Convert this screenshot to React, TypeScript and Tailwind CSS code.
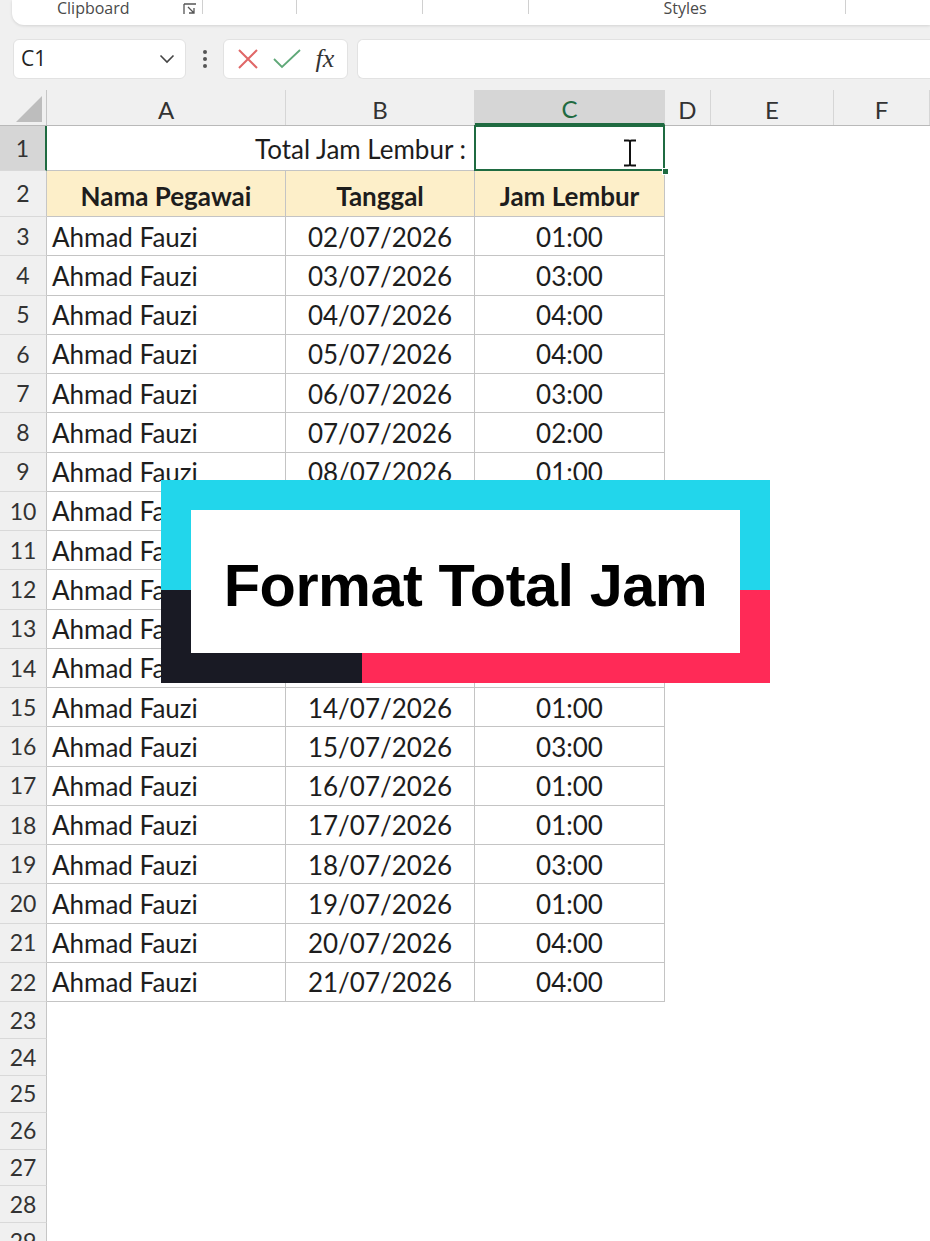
import React from "react";

type Entry = { date: string; hours: string };

const entries: Entry[] = [
  { date: "02/07/2026", hours: "01:00" },
  { date: "03/07/2026", hours: "03:00" },
  { date: "04/07/2026", hours: "04:00" },
  { date: "05/07/2026", hours: "04:00" },
  { date: "06/07/2026", hours: "03:00" },
  { date: "07/07/2026", hours: "02:00" },
  { date: "08/07/2026", hours: "01:00" },
  { date: "09/07/2026", hours: "02:00" },
  { date: "10/07/2026", hours: "03:00" },
  { date: "11/07/2026", hours: "01:00" },
  { date: "12/07/2026", hours: "04:00" },
  { date: "13/07/2026", hours: "02:00" },
  { date: "14/07/2026", hours: "01:00" },
  { date: "15/07/2026", hours: "03:00" },
  { date: "16/07/2026", hours: "01:00" },
  { date: "17/07/2026", hours: "01:00" },
  { date: "18/07/2026", hours: "03:00" },
  { date: "19/07/2026", hours: "01:00" },
  { date: "20/07/2026", hours: "04:00" },
  { date: "21/07/2026", hours: "04:00" },
];

const cellFont = { fontFamily: "Lato, 'Open Sans', sans-serif" };

function RowHead({ n, active }: { n: number; active?: boolean }) {
  return (
    <div
      className={`w-[47px] shrink-0 flex items-center justify-center border-b border-[#d9d9d9] text-[23px] ${
        active ? "bg-[#d6d6d6] border-r-2 border-r-[#1f6b41] text-[#333]" : "bg-[#f0f0f0] border-r border-r-[#c6c6c6] text-[#333]"
      }`}
    >
      {n}
    </div>
  );
}

function Ribbon() {
  return (
    <div className="h-[90px] bg-[#f0f0f0] flex flex-col" style={{ fontFamily: "'Open Sans', sans-serif" }}>
      {/* bottom edge of the ribbon groups */}
      <div className="ml-[12px] h-[25px] bg-white rounded-bl-[12px] shadow-[0_1px_3px_rgba(0,0,0,0.12)] flex items-start text-[#4a4a4a] text-[16px] leading-none">
        <div className="w-[190px] h-full relative flex items-start">
          <span className="ml-[45px]">Clipboard</span>
          <svg className="absolute left-[171px] top-[3px]" width="14" height="12" viewBox="0 0 14 12">
            <path d="M1 1h12M1 1v10" stroke="#555" strokeWidth="1.3" fill="none" />
            <path d="M5 4l6 6M11 5v5H6" stroke="#555" strokeWidth="1.3" fill="none" />
          </svg>
        </div>
        <div className="w-[94px] h-[14px] border-l border-[#d0d0d0]" />
        <div className="w-[126px] h-[14px] border-l border-[#d0d0d0]" />
        <div className="w-[106px] h-[14px] border-l border-[#d0d0d0]" />
        <div className="w-[317px] h-[14px] border-l border-[#d0d0d0] flex justify-center">
          <span className="-ml-[4px]">Styles</span>
        </div>
        <div className="flex-1 h-[14px] border-l border-[#d0d0d0]" />
      </div>

      {/* name box and formula bar */}
      <div className="mt-[13px] h-[41px] flex items-center">
        <div className="ml-[13px] w-[173px] h-[40px] bg-white rounded-[6px] border border-[#e2e2e2] flex items-center justify-between pl-[7px] pr-[10px]">
          <span className="text-[21px] text-[#222]">C1</span>
          <svg width="16" height="10" viewBox="0 0 16 10">
            <path d="M1.5 1.5l6.5 6.5 6.5-6.5" stroke="#444" strokeWidth="1.6" fill="none" />
          </svg>
        </div>
        <div className="w-[37px] flex flex-col items-center gap-[3px]">
          <span className="w-[4px] h-[4px] rounded-full bg-[#555]" />
          <span className="w-[4px] h-[4px] rounded-full bg-[#555]" />
          <span className="w-[4px] h-[4px] rounded-full bg-[#555]" />
        </div>
        <div className="w-[125px] h-[40px] bg-white rounded-[6px] border border-[#e2e2e2] flex items-center justify-around px-[6px]">
          <svg width="22" height="22" viewBox="0 0 22 22">
            <path d="M2 2l18 18M20 2L2 20" stroke="#e06767" strokeWidth="2" />
          </svg>
          <svg width="30" height="22" viewBox="0 0 30 22">
            <path d="M2 11l8 8L28 2" stroke="#5fa878" strokeWidth="1.8" fill="none" />
          </svg>
          <span className="text-[26px] italic text-[#333] leading-none" style={{ fontFamily: "'Liberation Serif', serif" }}>
            fx
          </span>
        </div>
        <div className="ml-[9px] flex-1 h-[40px] bg-white rounded-l-[6px] border border-r-0 border-[#e2e2e2]" />
      </div>
    </div>
  );
}

function ColumnHeader() {
  const cols = [
    { label: "A", w: "w-[239px]" },
    { label: "B", w: "w-[189px]" },
    { label: "C", w: "w-[190px]", active: true },
    { label: "D", w: "w-[46px]" },
    { label: "E", w: "w-[123px]" },
    { label: "F", w: "flex-1" },
  ];
  return (
    <div className="h-[36px] flex bg-[#f0f0f0] border-b border-[#b9b9b9] text-[24px]" style={cellFont}>
      <div className="w-[47px] shrink-0 border-r border-[#c6c6c6] relative">
        <svg className="absolute right-[4px] bottom-[3px]" width="26" height="26" viewBox="0 0 26 26">
          <path d="M26 0V26H0Z" fill="#bdbdbd" />
        </svg>
      </div>
      {cols.map((c) => (
        <div
          key={c.label}
          className={`${c.w} shrink-0 flex items-center justify-center pt-[4px] border-r border-[#d6d6d6] ${
            c.active ? "bg-[#d6d6d6] text-[#1f6b41] border-b-2 border-b-[#1f6b41]" : "text-[#333]"
          }`}
        >
          {c.label}
        </div>
      ))}
    </div>
  );
}

function Sheet() {
  return (
    <div className="flex flex-col text-[#1d1d1d]" style={cellFont}>
      <ColumnHeader />

      {/* row 1: merged label + selected total cell */}
      <div className="h-[45px] flex">
        <RowHead n={1} active />
        <div className="w-[428px] shrink-0 flex items-center justify-end pr-[8px] pt-[2px] text-[26px] border-b border-r border-[#c4c4c4]">
          Total Jam Lembur :
        </div>
        <div className="w-[190px] shrink-0 relative border-b border-[#c4c4c4]">
          <div className="absolute -left-[1px] -top-[1px] w-[191px] h-[46px] border-2 border-[#1f6b41]" />
          <div className="absolute right-[-4px] bottom-[-5px] w-[7px] h-[7px] bg-[#1f6b41] border border-white" />
          <svg className="absolute left-[148px] top-[13px]" width="14" height="28" viewBox="0 0 14 28">
            <path d="M1 1.5h4.5q1.5 0 1.5 1.5v22q0 1.5-1.5 1.5H1M13 1.5H8.5Q7 1.5 7 3v22q0 1.5 1.5 1.5H13" stroke="#111" strokeWidth="2" fill="none" />
          </svg>
        </div>
        <div className="flex-1" />
      </div>

      {/* row 2: headings */}
      <div className="h-[46px] flex">
        <RowHead n={2} />
        {["Nama Pegawai", "Tanggal", "Jam Lembur"].map((h, i) => (
          <div
            key={h}
            className={`${i === 0 ? "w-[239px]" : i === 1 ? "w-[189px]" : "w-[190px]"} shrink-0 flex items-center justify-center bg-[#fdefc9] font-bold text-[26px] border-b border-r border-[#c4c4c4] pt-[5px]`}
          >
            {h}
          </div>
        ))}
        <div className="flex-1" />
      </div>

      {entries.map((e, i) => (
        <div key={e.date} className="h-[39.25px] flex">
          <RowHead n={i + 3} />
          <div className="w-[239px] shrink-0 flex items-center pl-[5px] text-[26px] border-b border-r border-[#c4c4c4] pt-[2px]">
            Ahmad Fauzi
          </div>
          <div className="w-[189px] shrink-0 flex items-center justify-center text-[26px] border-b border-r border-[#c4c4c4] pt-[2px]">
            {e.date}
          </div>
          <div className="w-[190px] shrink-0 flex items-center justify-center text-[26px] border-b border-r border-[#c4c4c4] pt-[2px]">
            {e.hours}
          </div>
          <div className="flex-1" />
        </div>
      ))}

      {[23, 24, 25, 26, 27, 28, 29].map((n) => (
        <div key={n} className="h-[36.9px] flex">
          <RowHead n={n} />
          <div className="flex-1" />
        </div>
      ))}
    </div>
  );
}

export default function App() {
  return (
    <div className="w-[930px] h-[1241px] overflow-hidden bg-white relative">
      <Ribbon />
      <Sheet />

      {/* title card */}
      <div className="absolute left-[161px] top-[480px] w-[609px] h-[203px] grid grid-cols-[201px_408px] grid-rows-[110px_93px]">
        <div className="bg-[#22d6eb]" />
        <div className="bg-[#22d6eb]" />
        <div className="bg-[#191a24]" />
        <div className="bg-[#ff2a57]" />
        <div
          className="absolute left-[30px] top-[30px] w-[549px] h-[143px] bg-white flex items-center justify-center pt-[8px] text-[59.5px] font-bold text-black tracking-[-0.5px]"
          style={{ fontFamily: "'Liberation Sans', Arial, sans-serif" }}
        >
          Format Total Jam
        </div>
      </div>
    </div>
  );
}
